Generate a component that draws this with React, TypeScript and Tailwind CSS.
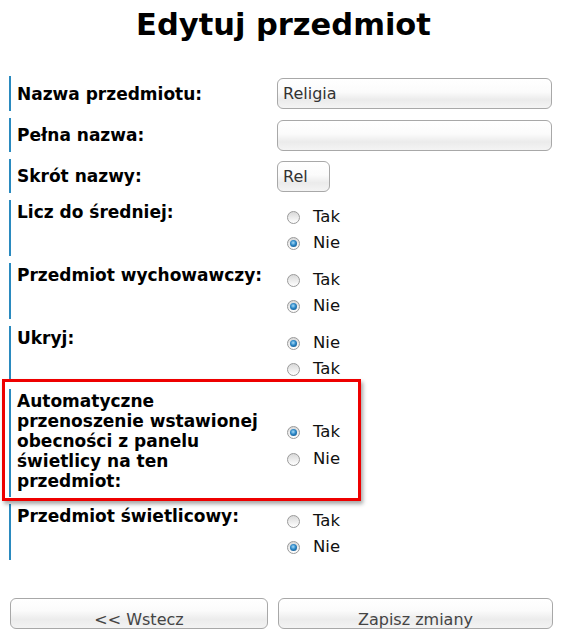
type Opt = { label: string; checked: boolean };

function Radio({ checked }: { checked: boolean }) {
  return (
    <span className="w-[13px] h-[13px] rounded-full border border-[#9a9a9a] bg-[linear-gradient(to_bottom,#d9d9d9,#ffffff)] flex items-center justify-center shrink-0">
      {checked && (
        <span className="w-[7px] h-[7px] rounded-full bg-[radial-gradient(circle_at_45%_40%,#a8dbf8_0%,#2a86c6_45%,#0c4578_100%)]" />
      )}
    </span>
  );
}

function RadioGroup({ options }: { options: Opt[] }) {
  return (
    <div className="flex flex-col pl-[10px] pt-[4px]">
      {options.map((o) => (
        <label key={o.label} className="h-[26px] flex items-center gap-[13px] text-[16.5px] text-[#111]">
          <Radio checked={o.checked} />
          <span>{o.label}</span>
        </label>
      ))}
    </div>
  );
}

function Label({ children }: { children: React.ReactNode }) {
  return (
    <div className="w-[268px] shrink-0 self-stretch border-l-2 border-[#2a8abf] pl-[6px] pr-[10px] pt-[2px] text-[17px] leading-[20px] font-bold text-black">
      {children}
    </div>
  );
}

const inputCls =
  'h-[31px] rounded-[6px] border border-[#a8a8a8] bg-[linear-gradient(to_bottom,#ffffff_0%,#fbfbfb_45%,#ebebeb_72%,#f4f4f4_100%)] px-[5px] text-[16px] text-[#333] outline-none';

const btnCls =
  'h-[31px] rounded-[6px] border border-[#a8a8a8] bg-[linear-gradient(to_bottom,#ffffff_0%,#fbfbfb_40%,#ececec_70%,#f3f3f3_100%)] pt-[12px] text-[16px] leading-[16px] text-[#444]';

function TextRow({ label, value, width, h }: { label: string; value: string; width: string; h: string }) {
  return (
    <div className={`flex items-center ${h}`}>
      <div className="w-[268px] shrink-0 h-full flex items-center border-l-2 border-[#2a8abf] pl-[6px] text-[17px] leading-[20px] font-bold text-black">
        {label}
      </div>
      <input className={`${inputCls} ${width}`} defaultValue={value} />
    </div>
  );
}

function RadioRow({ label, options }: { label: string; options: Opt[] }) {
  return (
    <div className="flex h-[56px]">
      <Label>{label}</Label>
      <RadioGroup options={options} />
    </div>
  );
}

const takNie = (tak: boolean): Opt[] => [
  { label: 'Tak', checked: tak },
  { label: 'Nie', checked: !tak },
];

export default function App() {
  return (
    <div className="w-[567px] h-[643px] bg-white font-['DejaVu_Sans','Verdana',sans-serif]">
      <h1 className="pt-[7px] text-center text-[30.5px] leading-[36px] font-bold text-black">Edytuj przedmiot</h1>

      <div className="ml-[9px] w-[543px] mt-[33px] flex flex-col gap-[7px]">
        <TextRow label="Nazwa przedmiotu:" value="Religia" width="w-[275px]" h="h-[35px]" />
        <TextRow label="Pełna nazwa:" value="" width="w-[275px]" h="h-[34px]" />
        <TextRow label="Skrót nazwy:" value="Rel" width="w-[53px]" h="h-[34px]" />
        <RadioRow label="Licz do średniej:" options={takNie(false)} />
        <RadioRow label="Przedmiot wychowawczy:" options={takNie(false)} />
        <RadioRow
          label="Ukryj:"
          options={[
            { label: 'Nie', checked: true },
            { label: 'Tak', checked: false },
          ]}
        />
        <div className="relative flex h-[108px]">
          <Label>Automatyczne przenoszenie wstawionej obecności z panelu świetlicy na ten przedmiot:</Label>
          <div className="flex items-center">
            <div className="flex flex-col pl-[10px] mt-[5px]">
              {takNie(true).map((o) => (
                <label key={o.label} className="h-[27px] flex items-center gap-[13px] text-[16.5px] text-[#111]">
                  <Radio checked={o.checked} />
                  <span>{o.label}</span>
                </label>
              ))}
            </div>
          </div>
          <div className="absolute left-[-7px] top-[-10px] w-[359px] h-[122px] border-[3px] border-[#ee0000] shadow-[2px_3px_4px_rgba(0,0,0,0.35)] pointer-events-none" />
        </div>
        <RadioRow label="Przedmiot świetlicowy:" options={takNie(false)} />
      </div>

      <div className="mt-[38px] ml-[10px] flex gap-[10px]">
        <button className={`${btnCls} w-[258px]`}>&lt;&lt; Wstecz</button>
        <button className={`${btnCls} w-[275px]`}>Zapisz zmiany</button>
      </div>
    </div>
  );
}
